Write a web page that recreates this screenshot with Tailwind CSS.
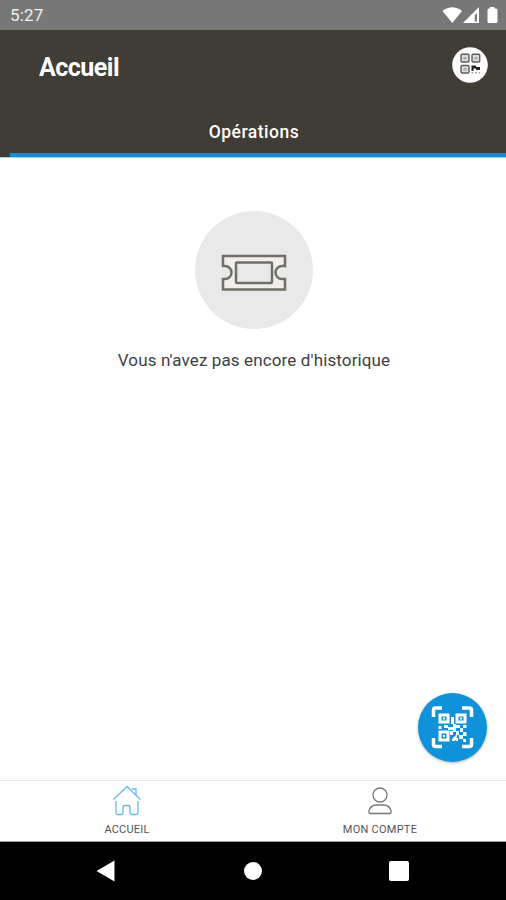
<!DOCTYPE html>
<html lang="fr">
<head>
<meta charset="utf-8">
<meta name="viewport" content="width=device-width">
<title>Accueil</title>
<script src="https://cdn.jsdelivr.net/npm/@tailwindcss/browser@4"></script>
</head>
<body class="bg-white font-[Roboto,sans-serif]">
<div class="relative flex h-[900px] w-[506px] flex-col overflow-hidden bg-white">
  <div class="flex h-[30px] items-center justify-between bg-[#777777] pr-[8px] pl-[10px] text-white">
    <span class="pt-[1px] text-[17px] leading-none tracking-[0.2px] text-[#f0f0f0]">5:27</span>
    <svg class="h-[30px] w-[56px]" viewBox="442 0 56 30" fill="#fff">
      <path d="M442.500 11Q452.500 3.500 462 11L452.300 23Z"/>
      <path fill-rule="evenodd" d="M479 7V23H463ZM474.800 15.500V21.500H477V13Z"/>
      <path d="M490 7H494.500V8.500H496Q497.500 8.500 497.500 10V21.500Q497.500 23 496 23H489Q487.500 23 487.500 21.500V10Q487.500 8.500 489 8.500H490Z"/>
    </svg>
  </div>
  <header class="flex h-[128px] flex-col bg-[#403c36] text-white">
    <div class="flex h-[70px] items-center justify-between pr-[18px] pl-[39px]">
      <h1 class="pt-[4px] text-[25px] leading-none font-bold tracking-[-0.5px]">Accueil</h1>
      <svg class="h-[36px] w-[36px]" viewBox="452 46 36 36">
        <circle cx="470" cy="64" r="17.800" fill="#fff"/>
        <g fill="#ddd" stroke="#5c5c5c" stroke-width="1.400">
          <rect x="461" y="53.300" width="8" height="7.700" rx="1"/>
          <rect x="472" y="53.300" width="7.700" height="7.700" rx="1"/>
          <rect x="461" y="64.500" width="8" height="7.500" rx="1"/>
        </g>
        <path fill="#aaa" d="M463.500 56h3v2.500h-3zM474.500 56h3v2.500h-3zM463.500 67h3v2.500h-3z"/>
        <path fill="#222" d="M471.500 64.500h4l1 1.500h3.500V69h-3.500l-1-1.500h-2V70h-2z"/>
        <path fill="#aaa" d="M471.500 71h2V72.500h-2zM475 71h2V72.500h-2zM478.500 71h1.500V72.500h-1.500z"/>
      </svg>
    </div>
    <div class="flex h-[53px] items-center justify-center">
      <span class="pt-[12px] pl-[2px] text-[17.5px] leading-none font-medium tracking-[0.5px]">Opérations</span>
    </div>
    <div class="flex h-[5px] flex-col bg-white">
      <div class="flex h-[4px] bg-[#403c36] pl-[10px]"><div class="flex-1 bg-[#128cd4]"></div></div>
      <div class="h-px bg-[#a9cfe8]"></div>
    </div>
  </header>
  <main class="flex flex-1 flex-col items-center pt-[53px] pl-[2px]">
    <div class="flex h-[118px] w-[118px] items-center justify-center rounded-full bg-[#e9e9e9]">
      <svg class="mt-[5px] h-[38px] w-[66px]" viewBox="0 0 66 38" fill="none" stroke="#716f6a" stroke-width="2.500">
        <path fill="#f0efec" d="M2 2H64V12A5 5 0 0 0 61 12A6.500 6.500 0 0 0 61 25H64V35.500H2V25H4A6.500 6.500 0 0 0 4 12H2Z"/>
        <rect x="15" y="8.500" width="36" height="20.500" rx="1" fill="#e9e9e9"/>
      </svg>
    </div>
    <p class="mt-[21px] text-[17px] leading-[20px] tracking-[0.13px] whitespace-nowrap text-[#3f3f3f]">Vous n'avez pas encore d'historique</p>
  </main>
  <nav class="grid h-[62px] grid-cols-2 border-t border-b border-t-[#e9e9e9] border-b-[#999] bg-white text-[#555]">
    <div class="flex flex-col items-center pl-[1px]">
      <svg class="mt-[2px] h-[33px] w-[32px]" viewBox="0 0 32 33" fill="none" stroke="#62b9f3" stroke-width="1.300">
        <path d="M2.500 16.500L16 3.500L29.500 16.500M21 6H25V12M5 18V30Q5 31.500 6.500 31.500H10.500Q12 31.500 12 30V24Q12 22.500 13.500 22.500H17.500Q19 22.500 19 24V30Q19 31.500 20.500 31.500H25.500Q27 31.500 27 30V18"/>
      </svg>
      <span class="mt-[7px] text-[11px] leading-[13px] tracking-[0.2px]">ACCUEIL</span>
    </div>
    <div class="flex flex-col items-center pl-[1px]">
      <svg class="mt-[2px] h-[33px] w-[32px]" viewBox="0 0 32 33" fill="none" stroke="#777" stroke-width="1.300">
        <circle cx="16" cy="12" r="7"/>
        <path d="M6.500 30.500Q4.500 30.500 5 28Q6.500 22 12.500 22H19.500Q25.500 22 27 28Q27.500 30.500 25.500 30.500Z"/>
      </svg>
      <span class="mt-[7px] text-[11px] leading-[13px] tracking-[0.25px]">MON COMPTE</span>
    </div>
  </nav>
  <div class="flex h-[58px] items-center justify-between bg-black pr-[97px] pl-[96px]">
    <svg class="h-[22px] w-[20px]" viewBox="0 0 20 22" fill="#fff"><path d="M.500 11L18.500.500V21.500Z"/></svg>
    <div class="ml-[1px] h-[18px] w-[18px] rounded-full bg-white"></div>
    <div class="h-[20px] w-[20px] rounded-[2px] bg-white"></div>
  </div>
  <button class="absolute top-[693px] left-[418px] h-[69px] w-[69px] rounded-full bg-[#0f92da] shadow-[0_1px_3px_rgba(0,0,0,.3)]" aria-label="Scanner">
    <svg class="h-[69px] w-[69px]" viewBox="418 693 69 69" fill="none" stroke="#fff">
      <path stroke-width="3.500" d="M433.500 717V710Q433.500 708 435.500 708H442M462 708H469.500Q471.500 708 471.500 710V717M433.500 738V744.500Q433.500 746.500 435.500 746.500H442M462 746.500H469.500Q471.500 746.500 471.500 744.500V738"/>
      <path stroke-width="3" d="M440 715h8v7h-8zM457 715h8v7h-8zM440 732h8v8h-8z"/>
      <g fill="#fff" stroke="none">
        <path d="M443 717.500h2v2h-2zM460 717.500h2v2h-2zM443 735h2v2h-2zM451 717h3v7h-3zM438.500 726h3v3h-3zM444 725h4v3h-4zM448 727h5v3h-5zM453 724h3v8h-3zM450 731h3v4h-3zM456 725h4v3h-4zM460 728h3v4h-3zM463 725h3.500v3H463zM456 731h3v4h-3zM463 732h3.500v4H463zM459 735h4v4h-4zM452 739l5-5v3l-2 4h-3zM463 739h3v3h-3zM456 738h2v3h-2z"/>
      </g>
    </svg>
  </button>
</div>
</body>
</html>
